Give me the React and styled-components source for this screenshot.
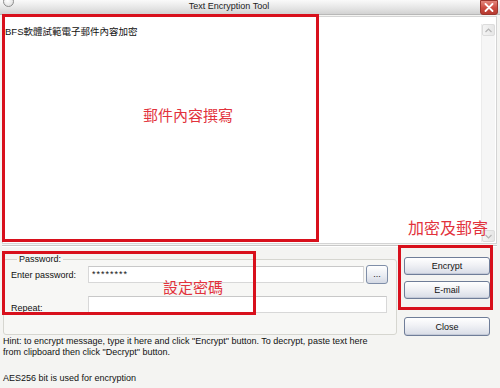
import React from "react";
import styled, { createGlobalStyle } from "styled-components";

const GlobalStyle = createGlobalStyle`
  html, body { margin: 0; padding: 0; background: #f4f4f2; }
  body { font-family: "Liberation Sans", Arial, "Noto Sans CJK TC", sans-serif; }
  * { box-sizing: border-box; }
`;

const Window = styled.div`
  position: relative;
  width: 500px;
  height: 388px;
  background: #f4f4f2;
  display: flex;
  flex-direction: column;
  overflow: hidden;
  font-size: 9px;
  color: #111;
`;

const TitleBar = styled.div`
  height: 15px;
  flex-shrink: 0;
  display: flex;
  align-items: flex-start;
  padding: 0 2px 0 3px;
  background: linear-gradient(#fafafa, #e4e4e4 60%, #d2d2d2);
  border-bottom: 1px solid #b8b8b8;
`;

const TitleIcon = styled.div`
  width: 11px;
  height: 11px;
  flex-shrink: 0;
  margin-top: -4px;
  border-radius: 50%;
  border: 1px solid #8d8d8d;
  background: radial-gradient(circle at 40% 40%, #ffffff, #d8d8d8);
`;

const Title = styled.div`
  flex: 1;
  text-align: center;
  padding-right: 36px;
  padding-top: 1px;
  font-size: 9px;
  line-height: 11px;
  color: #222;
`;

const CloseX = styled.div`
  width: 18px;
  height: 15px;
  flex-shrink: 0;
  border-radius: 0 0 3px 3px;
  background-color: #c9483d;
  background-image: linear-gradient(#e3877d, #cc4a3f 55%, #b53b31);
  border: 1px solid #9a352d;
  display: flex;
  align-items: center;
  justify-content: center;
`;

const Body = styled.div`
  flex: 1;
  display: flex;
  flex-direction: column;
  padding: 1px 3px 0 2px;
`;

const Editor = styled.div`
  height: 228px;
  flex-shrink: 0;
  display: flex;
  background: #fff;
  border: 1px solid #d4d4d4;
`;

const EditorText = styled.div`
  flex: 1;
  padding: 9px 0 0 2px;
  font-size: 9.5px;
  line-height: 12px;
  font-family: "Liberation Sans", Arial, "Noto Sans CJK TC", sans-serif;
  color: #111;
`;

const ScrollBar = styled.div`
  width: 14px;
  margin: 7px 1px 1px 0;
  display: flex;
  flex-direction: column;
  justify-content: space-between;
  background: #f6f6f6;
  border-left: 1px solid #ececec;
`;

const ScrollArrow = styled.div`
  height: 12px;
  display: flex;
  align-items: center;
  justify-content: center;
  background: linear-gradient(90deg, #f4f4f4, #e6e6e6);
  border: 1px solid #dcdcdc;
  border-radius: 2px;
`;

const Separator = styled.div`
  margin-top: 1px;
  height: 2px;
  flex-shrink: 0;
  border-top: 1px solid #c8c8c8;
  border-bottom: 1px solid #ffffff;
`;

const Lower = styled.div`
  display: flex;
  align-items: flex-start;
  gap: 7px;
  margin-top: 7px;
  padding-left: 1px;
  flex-shrink: 0;
`;

const GroupBox = styled.fieldset`
  width: 394px;
  height: 81px;
  margin: 0;
  padding: 0 0 0 7px;
  border: 1px solid #d6d6d0;
  border-radius: 3px;
  background: #f7f7f5;
  display: flex;
  flex-direction: column;
`;

const Legend = styled.legend`
  padding: 0 2px;
  margin-left: 6px;
  font-size: 9px;
  color: #111;
`;

const FieldRow = styled.div`
  display: flex;
  align-items: ${(p) => (p.$low ? "flex-end" : "center")};
  height: ${(p) => p.$h}px;
  margin-top: ${(p) => p.$mt}px;
`;

const Label = styled.div`
  width: 77px;
  font-size: 9px;
`;

const TextInput = styled.div`
  width: ${(p) => p.$w}px;
  height: 17px;
  background: #ffffff;
  border: 1px solid #d8d8d8;
  border-top-color: #c8c8c8;
  font-size: 9px;
  line-height: 11px;
  padding: 2px 0 0 3px;
  letter-spacing: 1px;
`;

const DotsButton = styled.div`
  width: 22px;
  height: 19px;
  margin-left: 2px;
  border: 1px solid #7f8ea8;
  border-radius: 3px;
  background: linear-gradient(#ffffff, #e8ebf1 60%, #d4d9e4);
  font-size: 9px;
  display: flex;
  align-items: center;
  justify-content: center;
  padding-bottom: 2px;
`;

const ButtonColumn = styled.div`
  width: 86px;
  display: flex;
  flex-direction: column;
  padding-top: 3px;
`;

const Button = styled.div`
  height: ${(p) => p.$h || 18}px;
  margin-top: ${(p) => p.$mt || 0}px;
  border: 1px solid #6f7d98;
  border-radius: 3px;
  background: linear-gradient(#ffffff, #f0f1f5 45%, #d8dce6);
  box-shadow: inset 0 -1px 0 #c4cad8;
  font-size: 9px;
  display: flex;
  align-items: center;
  justify-content: center;
  color: #111;
`;

const Hint = styled.div`
  margin-top: 0;
  padding-left: 1px;
  font-size: 9px;
  line-height: 11px;
  width: 380px;
`;

const Footer = styled.div`
  margin-top: 15px;
  padding-left: 1px;
  font-size: 9px;
  line-height: 11px;
`;

const RedBox = styled.div`
  position: absolute;
  left: ${(p) => p.$x}px;
  top: ${(p) => p.$y}px;
  width: ${(p) => p.$w}px;
  height: ${(p) => p.$h}px;
  border: 3px solid #d8101c;
  pointer-events: none;
`;

const RedNote = styled.div`
  position: absolute;
  left: ${(p) => p.$x}px;
  top: ${(p) => p.$y}px;
  font-family: "Noto Sans CJK TC", "Noto Sans CJK SC", sans-serif;
  font-size: ${(p) => p.$size || 15}px;
  line-height: 1;
  color: #e2323c;
  white-space: nowrap;
`;

export default function App() {
  return (
    <>
      <GlobalStyle />
      <Window>
        <TitleBar>
          <TitleIcon />
          <Title>Text Encryption Tool</Title>
          <CloseX>
            <svg width="10" height="9" viewBox="0 0 10 9">
              <path d="M1.5 1 L8.5 8 M8.5 1 L1.5 8" stroke="#ffffff" strokeWidth="1.8" strokeLinecap="round" />
            </svg>
          </CloseX>
        </TitleBar>
        <Body>
          <Editor>
            <EditorText>BFS軟體試範電子郵件內容加密</EditorText>
            <ScrollBar>
              <ScrollArrow>
                <svg width="7" height="5" viewBox="0 0 7 5">
                  <path d="M0.5 4 L3.5 1 L6.5 4" stroke="#b4b4b4" strokeWidth="1.2" fill="none" />
                </svg>
              </ScrollArrow>
              <ScrollArrow>
                <svg width="7" height="5" viewBox="0 0 7 5">
                  <path d="M0.5 1 L3.5 4 L6.5 1" stroke="#b4b4b4" strokeWidth="1.2" fill="none" />
                </svg>
              </ScrollArrow>
            </ScrollBar>
          </Editor>
          <Separator />
          <Lower>
            <GroupBox>
              <Legend>Password:</Legend>
              <FieldRow $h={19} $mt={1}>
                <Label>Enter password:</Label>
                <TextInput $w={276}>********</TextInput>
                <DotsButton>...</DotsButton>
              </FieldRow>
              <FieldRow $h={17} $mt={12} $low>
                <Label>Repeat:</Label>
                <TextInput $w={299} />
              </FieldRow>
            </GroupBox>
            <ButtonColumn>
              <Button>Encrypt</Button>
              <Button $mt={6}>E-mail</Button>
              <Button $mt={18} $h={19}>Close</Button>
            </ButtonColumn>
          </Lower>
          <Hint>
            Hint: to encrypt message, type it here and click "Encrypt" button. To decrypt, paste text here from clipboard then click "Decrypt" button.
          </Hint>
          <Footer>AES256 bit is used for encryption</Footer>
        </Body>
        <RedBox $x={2} $y={14} $w={317} $h={228} />
        <RedBox $x={2} $y={251} $w={254} $h={64} />
        <RedBox $x={398} $y={245} $w={95} $h={65} />
        <RedNote $x={143} $y={107}>郵件內容撰寫</RedNote>
        <RedNote $x={163} $y={279}>設定密碼</RedNote>
        <RedNote $x={408} $y={219} $size={16}>加密及郵寄</RedNote>
      </Window>
    </>
  );
}
